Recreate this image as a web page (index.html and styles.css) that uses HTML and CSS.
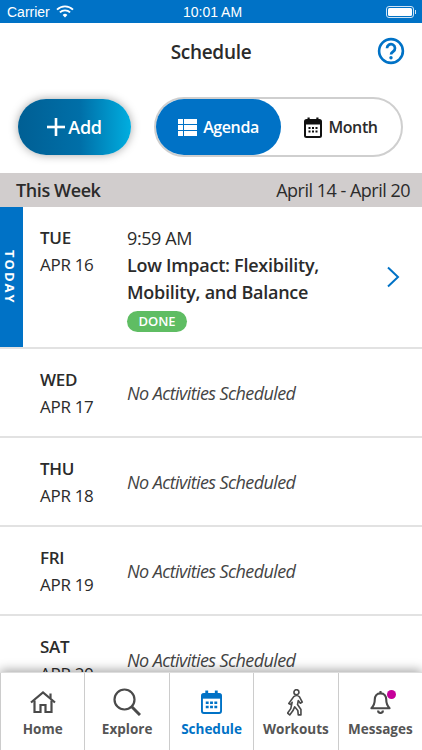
FILE: index.html
```html
<!DOCTYPE html>
<html lang="en">

<head>
    <meta charset="UTF-8">
    <title>Schedule</title>
    <link rel="stylesheet" href="styles.css">
</head>

<body>
    <div class="status">
        <div class="status_left">
            <span>Carrier</span>
            <svg width="18" height="13" viewBox="0 0 18 13">
                <path d="M1 4.600a11.500 11.500 0 0 1 16 0" fill="none" stroke="#fff" stroke-width="1.900" />
                <path d="M3.900 7.400a7.400 7.400 0 0 1 10.200 0" fill="none" stroke="#fff" stroke-width="1.900" />
                <path d="M6.600 9.900a3.600 3.600 0 0 1 4.800 0L9 12.400z" fill="#fff" />
            </svg>
        </div>
        <div class="status_time">10:01 AM</div>
        <div class="status_right">
            <div class="battery"><div class="battery_fill"></div></div>
            <div class="battery_tip"></div>
        </div>
    </div>

    <div class="header">
        <h1>Schedule</h1>
        <svg class="help" width="28" height="28" viewBox="0 0 28 28">
            <circle cx="14" cy="14" r="11.900" fill="none" stroke="#0072c6" stroke-width="2.600" />
            <path d="M10 11.200a4 4 0 1 1 6.200 3.300c-1.400.9-2.200 1.600-2.200 3.100" fill="none" stroke="#0072c6" stroke-width="2.700" />
            <circle cx="14" cy="20.800" r="1.700" fill="#0072c6" />
        </svg>
    </div>

    <div class="actions">
        <button class="add">
            <svg width="18" height="18" viewBox="0 0 18 18" fill="#fff">
                <rect x="0" y="7.700" width="18" height="2.600" />
                <rect x="7.700" y="0" width="2.600" height="18" />
            </svg>
            Add
        </button>
        <div class="toggle">
            <div class="toggle_item active">
                <svg width="19" height="17" viewBox="0 0 19 17" fill="#fff">
                    <rect x="0" y="0" width="5" height="5" />
                    <rect x="6" y="0" width="13" height="5" />
                    <rect x="0" y="6" width="5" height="5" />
                    <rect x="6" y="6" width="13" height="5" />
                    <rect x="0" y="12" width="5" height="5" />
                    <rect x="6" y="12" width="13" height="5" />
                </svg>
                Agenda
            </div>
            <div class="toggle_item">
                <svg width="18" height="21" viewBox="0 0 18 21">
                    <rect x="1" y="3" width="16" height="17" rx="1.500" fill="none" stroke="#111" stroke-width="2" />
                    <rect x="1" y="3" width="16" height="4.500" fill="#111" />
                    <rect x="3.500" y="0.500" width="2.200" height="4" fill="#111" />
                    <rect x="12.300" y="0.500" width="2.200" height="4" fill="#111" />
                    <path d="M4.500 10h2v2h-2zM8 10h2v2H8zM11.500 10h2v2h-2zM4.500 13.500h2v2h-2zM8 13.500h2v2H8zM11.500 13.500h2v2h-2z" fill="#111" />
                </svg>
                Month
            </div>
        </div>
    </div>

    <div class="week">
        <b>This Week</b>
        <span>April 14 - April 20</span>
    </div>

    <div class="list">
        <div class="day today">
            <div class="today_tag"><span>TODAY</span></div>
            <div class="day_date">
                <b>TUE</b>
                <span>APR 16</span>
            </div>
            <div class="day_info">
                <div>9:59 AM</div>
                <b>Low Impact: Flexibility,<br>Mobility, and Balance</b>
                <div class="done">DONE</div>
            </div>
            <svg class="chevron" width="14" height="22" viewBox="0 0 14 22">
                <path d="M2 1.500 12 11 2 20.500" fill="none" stroke="#0072c6" stroke-width="2" />
            </svg>
        </div>
        <div class="day">
            <div class="day_date"><b>WED</b><span>APR 17</span></div>
            <i>No Activities Scheduled</i>
        </div>
        <div class="day">
            <div class="day_date"><b>THU</b><span>APR 18</span></div>
            <i>No Activities Scheduled</i>
        </div>
        <div class="day">
            <div class="day_date"><b>FRI</b><span>APR 19</span></div>
            <i>No Activities Scheduled</i>
        </div>
        <div class="day">
            <div class="day_date"><b>SAT</b><span>APR 20</span></div>
            <i>No Activities Scheduled</i>
        </div>
    </div>

    <div class="tabs">
        <div class="tab">
            <div class="tab_icon">
                <svg width="26" height="22" viewBox="0 0 26 22" fill="none" stroke="#4a4a4a" stroke-width="2.200">
                    <path d="M1 11.500 13 1.500l12 10" />
                    <path d="M4.500 9.500V21h6v-7h5v7h6V9.500" />
                    <path d="M20.500 2.500v4.500" />
                </svg>
            </div>
            Home
        </div>
        <div class="tab">
            <div class="tab_icon">
                <svg width="28" height="28" viewBox="0 0 28 28" fill="none" stroke="#4a4a4a" stroke-width="2.200">
                    <circle cx="11.500" cy="11.500" r="10" />
                    <path d="M18.500 18.500l8.500 8.500" stroke-width="3" />
                </svg>
            </div>
            Explore
        </div>
        <div class="tab active">
            <div class="tab_icon">
                <svg width="21" height="24" viewBox="0 0 22 25">
                    <rect x="1" y="4" width="20" height="20" rx="2" fill="none" stroke="#0072c6" stroke-width="2" />
                    <rect x="1" y="4" width="20" height="5" fill="#0072c6" />
                    <rect x="4.500" y="0.500" width="3" height="5" fill="#0072c6" />
                    <rect x="14.500" y="0.500" width="3" height="5" fill="#0072c6" />
                    <path d="M5 12h3v2.500H5zM9.500 12h3v2.500h-3zM14 12h3v2.500h-3zM5 16.500h3V19H5zM9.500 16.500h3V19h-3zM14 16.500h3V19h-3z" fill="#0072c6" />
                </svg>
            </div>
            Schedule
        </div>
        <div class="tab">
            <div class="tab_icon">
                <svg width="18" height="27" viewBox="0 0 20 30" fill="none" stroke="#4a4a4a" stroke-width="1.800" stroke-linejoin="round">
                    <circle cx="10.500" cy="3.600" r="2.800" />
                    <path d="M7.500 8.500c2-1.500 5-1.500 6.500.5l3 5.500-2.200 1.300-2.300-3-.8 4.500 3.800 5.500v6h-3l-.5-5-3.500-4-2 4.500-3.500 4.500-2.300-2 3.500-5 1.500-7-1.500 2.500-2.200-1.200z" />
                </svg>
            </div>
            Workouts
        </div>
        <div class="tab">
            <div class="tab_icon">
                <svg width="21" height="24" viewBox="0 0 22 25" fill="none" stroke="#4a4a4a" stroke-width="2.200">
                    <path d="M11 3.500c-4 0-6 3-6 6.500 0 5-1.500 7-3.500 9h19c-2-2-3.500-4-3.500-9 0-3.500-2-6.500-6-6.500z" stroke-linejoin="round" />
                    <path d="M11 1v2.500" />
                    <path d="M8.500 21.500a2.500 2.500 0 0 0 5 0" />
                </svg>
                <div class="badge"></div>
            </div>
            Messages
        </div>
    </div>
</body>

</html>
```

FILE: styles.css
```css
* {
    box-sizing: border-box;
    font-family: "Open Sans", sans-serif;
}

html,
body {
    margin: 0;
    height: 100%;
    overflow: hidden;
    background: #fff;
    color: #2b2b2b;
}

body {
    display: flex;
    flex-flow: column;
    position: relative;
}

.status {
    height: 23px;
    flex: none;
    background: #0072c6;
    color: #fff;
    display: flex;
    align-items: center;
    justify-content: space-between;
    padding: 0 6px 0 7px;
    font-size: 14px;
}

.status span,
.status_time {
    font-family: "Liberation Sans", sans-serif;
}

.status_left {
    display: flex;
    align-items: center;
    gap: 6px;
    width: 122px;
}

.status_right {
    display: flex;
    align-items: center;
    justify-content: flex-end;
    width: 120px;
}

.battery {
    width: 28px;
    height: 12px;
    border: 1px solid #cfe4f5;
    border-radius: 3px;
    padding: 1px;
}

.battery_fill {
    height: 100%;
    background: #fff;
    border-radius: 1.5px;
}

.battery_tip {
    width: 1.5px;
    height: 4px;
    background: #cfe4f5;
    margin-left: 1px;
}

.header {
    height: 58px;
    flex: none;
    position: relative;
    display: flex;
    align-items: center;
    justify-content: center;
}

.header h1 {
    margin: 0;
    font-size: 19px;
    font-weight: 600;
    letter-spacing: -0.3px;
}

.help {
    position: absolute;
    right: 17px;
    top: 14px;
}

.actions {
    flex: none;
    height: 92px;
    display: flex;
    align-items: center;
    gap: 23px;
    padding: 0 18px;
}

.add {
    width: 113px;
    height: 56px;
    border: none;
    border-radius: 28px;
    background: linear-gradient(90deg, #005f94 0%, #006fa8 55%, #00aee0 100%);
    color: #fff;
    font-size: 18px;
    font-weight: 600;
    letter-spacing: -0.3px;
    box-shadow: 0 0 10px rgba(0, 0, 0, 0.35);
    display: flex;
    align-items: center;
    justify-content: center;
    gap: 3px;
    padding: 0;
}

.toggle {
    width: 249px;
    height: 60px;
    border: 2px solid #cfcfcf;
    border-radius: 30px;
    display: flex;
    padding: 0;
}

.toggle_item {
    flex: 1;
    display: flex;
    align-items: center;
    justify-content: center;
    gap: 6px;
    font-size: 16px;
    font-weight: 600;
    letter-spacing: -0.4px;
    border-radius: 28px;
}

.toggle_item.active {
    flex: none;
    width: 125px;
    background: #0072c6;
    color: #fff;
}

.week {
    height: 34px;
    flex: none;
    background: #d1cdcd;
    display: flex;
    align-items: center;
    justify-content: space-between;
    padding: 0 12px 0 16px;
    font-size: 18px;
    letter-spacing: -0.4px;
}

.week b {
    font-weight: 600;
}

.week span {
    letter-spacing: -0.5px;
}

.list {
    flex: 1;
    overflow: hidden;
}

.day {
    height: 89px;
    display: flex;
    align-items: center;
    padding-left: 40px;
    border-bottom: 2px solid #e2e2e2;
}

.day.today {
    height: 142px;
    padding-left: 0;
    align-items: flex-start;
    position: relative;
}

.today_tag {
    width: 23px;
    height: 100%;
    background: #0072c6;
    color: #fff;
    display: flex;
    align-items: center;
    justify-content: center;
    padding-right: 3px;
    margin-right: 17px;
}

.today_tag span {
    writing-mode: vertical-rl;
    font-size: 13px;
    font-weight: 700;
    letter-spacing: 2px;
}

.day_date {
    width: 87px;
    display: flex;
    flex-flow: column;
    font-size: 17px;
    letter-spacing: -0.3px;
    line-height: 27px;
}

.today .day_date {
    margin-top: 17px;
}

.day_date b {
    font-weight: 600;
}

.day i {
    font-size: 18px;
    letter-spacing: -0.6px;
    color: #444;
}

.day_info {
    margin-top: 18px;
    font-size: 18px;
    letter-spacing: -0.4px;
    line-height: 27px;
}

.day_info b {
    font-weight: 600;
    letter-spacing: -0.25px;
    display: block;
}

.done {
    width: 60px;
    height: 21px;
    margin-top: 5px;
    border-radius: 10.5px;
    background: #5fbd63;
    color: #fff;
    font-size: 13px;
    font-weight: 600;
    letter-spacing: 0;
    line-height: 21px;
    text-align: center;
}

.chevron {
    position: absolute;
    right: 22px;
    top: 59px;
}

.tabs {
    position: absolute;
    left: 0;
    right: 0;
    bottom: 0;
    height: 78px;
    background: #fff;
    display: flex;
    box-shadow: 0 -2px 10px rgba(0, 0, 0, 0.35);
    border-top: 1px solid #ddd;
}

.tab {
    flex: 1;
    border-left: 1px solid #ccc;
    padding-top: 9px;
    display: flex;
    flex-flow: column;
    align-items: center;
    font-size: 13.5px;
    font-weight: 700;
    line-height: 14px;
    color: #555;
}

.tab.active {
    color: #0072c6;
}

.tab_icon {
    height: 40px;
    display: flex;
    align-items: center;
    justify-content: center;
    position: relative;
}

.badge {
    position: absolute;
    top: 8px;
    right: -5px;
    width: 9px;
    height: 9px;
    border-radius: 50%;
    background: #c6009a;
}
```
